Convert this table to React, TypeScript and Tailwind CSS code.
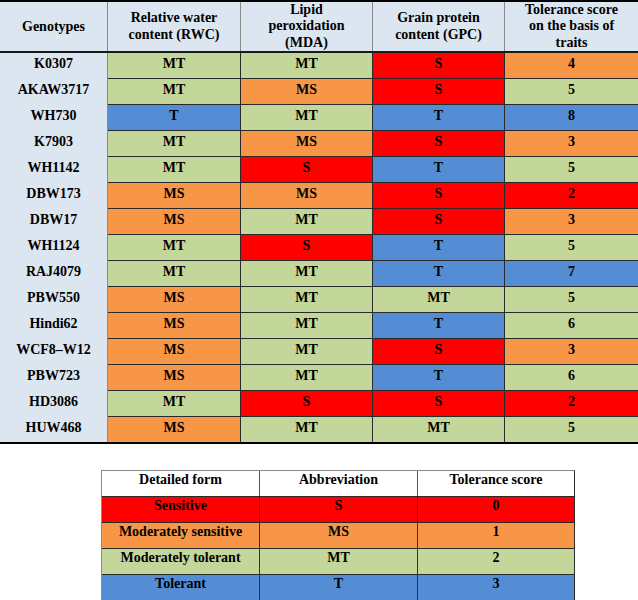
import React from "react";

type Level = "S" | "MS" | "MT" | "T";

const LEVEL_BG: Record<Level, string> = {
  S: "bg-[#ff0000]",
  MS: "bg-[#f79646]",
  MT: "bg-[#c4d79b]",
  T: "bg-[#548dd4]",
};

const scoreBg = (n: number) => {
  if (n <= 2) return "bg-[#ff0000]";
  if (n <= 4) return "bg-[#f79646]";
  if (n <= 6) return "bg-[#c4d79b]";
  return "bg-[#548dd4]";
};

const ROWS: { name: string; rwc: Level; mda: Level; gpc: Level; score: number }[] = [
  { name: "K0307", rwc: "MT", mda: "MT", gpc: "S", score: 4 },
  { name: "AKAW3717", rwc: "MT", mda: "MS", gpc: "S", score: 5 },
  { name: "WH730", rwc: "T", mda: "MT", gpc: "T", score: 8 },
  { name: "K7903", rwc: "MT", mda: "MS", gpc: "S", score: 3 },
  { name: "WH1142", rwc: "MT", mda: "S", gpc: "T", score: 5 },
  { name: "DBW173", rwc: "MS", mda: "MS", gpc: "S", score: 2 },
  { name: "DBW17", rwc: "MS", mda: "MT", gpc: "S", score: 3 },
  { name: "WH1124", rwc: "MT", mda: "S", gpc: "T", score: 5 },
  { name: "RAJ4079", rwc: "MT", mda: "MT", gpc: "T", score: 7 },
  { name: "PBW550", rwc: "MS", mda: "MT", gpc: "MT", score: 5 },
  { name: "Hindi62", rwc: "MS", mda: "MT", gpc: "T", score: 6 },
  { name: "WCF8–W12", rwc: "MS", mda: "MT", gpc: "S", score: 3 },
  { name: "PBW723", rwc: "MS", mda: "MT", gpc: "T", score: 6 },
  { name: "HD3086", rwc: "MT", mda: "S", gpc: "S", score: 2 },
  { name: "HUW468", rwc: "MS", mda: "MT", gpc: "MT", score: 5 },
];

const LEGEND: { form: string; abbr: Level; score: number }[] = [
  { form: "Sensitive", abbr: "S", score: 0 },
  { form: "Moderately sensitive", abbr: "MS", score: 1 },
  { form: "Moderately tolerant", abbr: "MT", score: 2 },
  { form: "Tolerant", abbr: "T", score: 3 },
];

const WIDTHS = ["w-[108px]", "w-[133px]", "w-[132px]", "w-[132px]", "w-[133px]"];

export default function App() {
  return (
    <div className="w-[638px] h-[600px] bg-white text-black font-bold text-[14px] font-['Liberation_Serif','Times_New_Roman',serif]">
      {/* main table */}
      <div className="border-t-2 border-b-2 border-black">
        <div className="flex h-[51px] bg-[#dce6f1] border-b-2 border-[#1a1a1a] leading-[16.5px] text-center">
          <div className={`${WIDTHS[0]} shrink-0 flex items-center justify-center border-r border-[#8a8a8a] pt-[2px]`}>Genotypes</div>
          <div className={`${WIDTHS[1]} shrink-0 flex items-center justify-center border-r border-[#8a8a8a]`}>
            Relative water<br />content (RWC)
          </div>
          <div className={`${WIDTHS[2]} shrink-0 flex items-center justify-center border-r border-[#8a8a8a]`}>
            Lipid<br />peroxidation<br />(MDA)
          </div>
          <div className={`${WIDTHS[3]} shrink-0 flex items-center justify-center border-r border-[#8a8a8a]`}>
            Grain protein<br />content (GPC)
          </div>
          <div className="flex-1 flex items-center justify-center">
            Tolerance score<br />on the basis of<br />traits
          </div>
        </div>

        {ROWS.map((r, i) => {
          const last = i === ROWS.length - 1;
          const rowH = last ? "h-[25px]" : "h-[26px]";
          const line = last ? "" : "border-b border-[#2a2a2a]";
          return (
            <div key={r.name} className={`flex ${rowH} leading-[16px] text-center`}>
              <div className={`${WIDTHS[0]} shrink-0 bg-[#dce6f1] border-r border-[#8a8a8a] pt-[3px]`}>{r.name}</div>
              <div className={`${WIDTHS[1]} shrink-0 ${LEVEL_BG[r.rwc]} ${line} border-r border-r-[#2a2a2a] pt-[3px]`}>{r.rwc}</div>
              <div className={`${WIDTHS[2]} shrink-0 ${LEVEL_BG[r.mda]} ${line} border-r border-r-[#2a2a2a] pt-[3px]`}>{r.mda}</div>
              <div className={`${WIDTHS[3]} shrink-0 ${LEVEL_BG[r.gpc]} ${line} border-r border-r-[#2a2a2a] pt-[3px]`}>{r.gpc}</div>
              <div className={`flex-1 ${scoreBg(r.score)} ${line} pt-[3px]`}>{r.score}</div>
            </div>
          );
        })}
      </div>

      {/* legend */}
      <div className="mt-[26px] ml-[101px] w-[474px] border border-[#8a8a8a] border-b-[#2a2a2a] border-r-[#2a2a2a] leading-[16px] text-center">
        <div className="flex h-[26px] bg-white border-b border-[#2a2a2a]">
          <div className="w-[158px] shrink-0 border-r border-[#555555] pt-[1px]">Detailed form</div>
          <div className="w-[158px] shrink-0 border-r border-[#555555] pt-[1px]">Abbreviation</div>
          <div className="flex-1 pt-[1px]">Tolerance score</div>
        </div>
        {LEGEND.map((l, i) => (
          <div
            key={l.abbr}
            className={`flex ${i === LEGEND.length - 1 ? "h-[25px]" : "h-[26px] border-b border-[#2a2a2a]"} ${LEVEL_BG[l.abbr]}`}
          >
            <div className="w-[158px] shrink-0 border-r border-[#333333] pt-[1px]">{l.form}</div>
            <div className="w-[158px] shrink-0 border-r border-[#333333] pt-[1px]">{l.abbr}</div>
            <div className="flex-1 pt-[1px]">{l.score}</div>
          </div>
        ))}
      </div>
    </div>
  );
}
